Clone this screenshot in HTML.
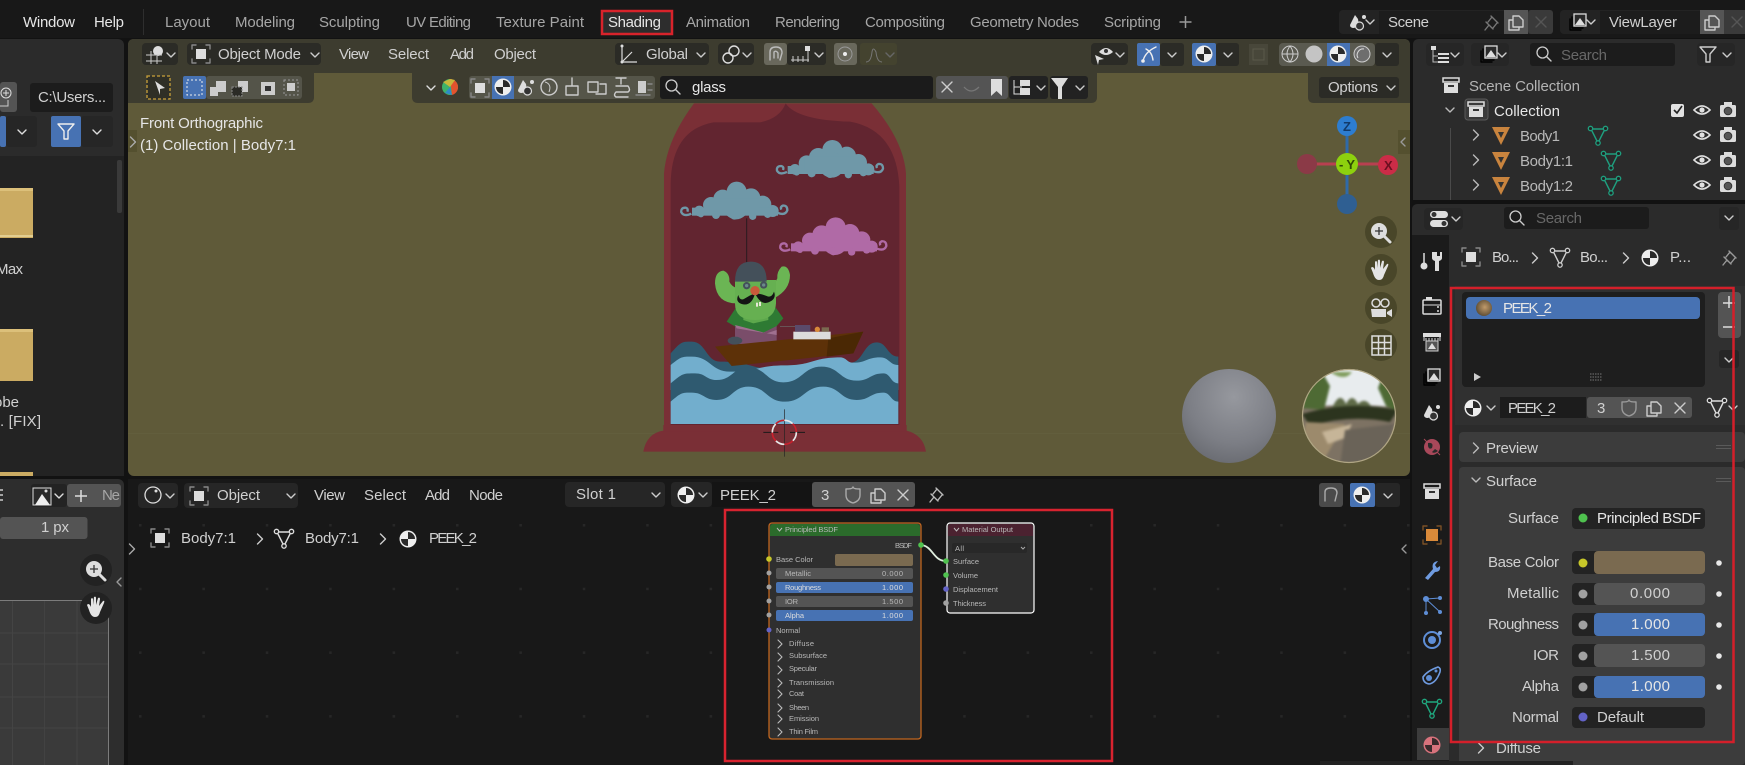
<!DOCTYPE html>
<html><head><meta charset="utf-8"><title>Blender Shading</title>
<style>
html,body{margin:0;padding:0;background:#121212;width:1745px;height:765px;overflow:hidden}
svg{display:block;filter:blur(.35px)}
text{font-family:"Liberation Sans",sans-serif;font-size:15px;fill:#d0d0d0}
.d{fill:#a6a6a6}.w{fill:#e6e6e6}.g{fill:#686868}
.n text,text.n{font-size:7.5px;fill:#b8b8b8}
.s{fill:none;stroke:currentColor;stroke-width:1.4;stroke-linecap:round;stroke-linejoin:round}
</style></head><body>
<svg width="1745" height="765" viewBox="0 0 1745 765" xmlns="http://www.w3.org/2000/svg">
<defs>
<g id="cd"><path class="s" d="M-4-2L0 2L4-2"/></g>
<g id="cr"><path class="s" d="M-2.5-5L2.5 0L-2.5 5"/></g>
<g id="cl"><path class="s" d="M2-4L-2 0L2 4"/></g>
<g id="obj"><rect x="-5" y="-5" width="10" height="10" fill="#ddd"/><path class="s" style="color:#888" stroke-width="1" d="M-9-5V-9H-5M5-9H9V-5M9 5V9H5M-5 9H-9V5"/></g>
<g id="mesh"><path class="s" d="M-7-6L7-6L0 8Z"/><circle cx="-7.500" cy="-6.500" r="2.200" fill="#222" stroke="currentColor" stroke-width="1.300"/><circle cx="7.500" cy="-6.500" r="2.200" fill="#222" stroke="currentColor" stroke-width="1.300"/><circle cx="0" cy="8" r="2.200" fill="#222" stroke="currentColor" stroke-width="1.300"/></g>
<g id="mat"><circle r="8.500" fill="#eee"/><path d="M0-7A7 7 0 0 1 7 0H0ZM0 0V7A7 7 0 0 1-7 0Z" fill="#2a2a2a"/></g>
<g id="box"><rect x="-8" y="-8" width="16" height="4" fill="none" stroke="#ddd" stroke-width="1.500"/><rect x="-7" y="-3" width="14" height="10" fill="#ddd"/><rect x="-3" y="-1" width="6" height="2" fill="#333"/></g>
<g id="eye"><path d="M-8 0Q0-8 8 0Q0 8-8 0Z" fill="none" stroke="#e0e0e0" stroke-width="1.600"/><circle r="2.600" fill="#e0e0e0"/></g>
<g id="cam"><rect x="-8" y="-5" width="16" height="12" rx="1.500" fill="#dcdcdc"/><rect x="-4" y="-8" width="8" height="3" fill="#dcdcdc"/><circle cy="1" r="3.800" fill="#555" stroke="#333"/></g>
<g id="tri"><path d="M-9-8H9L0 10Z" fill="#c9843e"/><path d="M-3-3H3L0 3Z" fill="#333"/></g>
<g id="pin"><path class="s" d="M-5 7L-1 2M-4-1L3 6M-2-1L2-6M3 5L7 0M1-7L8 0"/></g>
<g id="cpy"><path class="s" d="M-3-6H3L7-2V5H-3ZM-3-2H-7V8H3V5"/></g>
<g id="x"><path class="s" d="M-5-5L5 5M5-5L-5 5"/></g>
<g id="shd"><path class="s" d="M-7-6Q0-6 0-8Q0-6 7-6V0Q7 6 0 8Q-7 6-7 0Z"/></g>
<g id="srch"><circle cx="-1.500" cy="-1.500" r="5.500" fill="none" stroke="currentColor" stroke-width="1.300"/><path class="s" d="M2.500 2.500L7 7"/></g>
<g id="fun"><path class="s" d="M-8-7H8L2 0V8L-2 8V0Z"/></g>
<g id="scn"><path d="M-3-7L-8 3Q-8 6-4 6L1 4L0-3Z" fill="#ddd"/><circle cx="1.500" cy="4" r="4" fill="#333" stroke="#ddd" stroke-width="1.200"/><circle cx="6" cy="-5" r="2" fill="#ddd"/></g>
<g id="vl"><path class="s" d="M-8-3V8H3M-6-5V6H5"/><rect x="-4" y="-8" width="12" height="12" fill="#2a2a2a" stroke="#ddd" stroke-width="1.300"/><path d="M-3 3L2-4L7 3Z" fill="#ddd"/></g>
<g id="lens"><circle cx="-1" cy="-1" r="8" fill="#ddd"/><path d="M-5-1H3M-1-5V3" stroke="#333" stroke-width="1.300"/><path d="M5 5L10 10" stroke="#ddd" stroke-width="3" stroke-linecap="round"/></g>
<g id="hand"><path d="M-8 2L-10-3Q-9-5-7-3L-6-1V-9Q-5-11-4-9V-3L-3-11Q-1-12-1-10V-3L1-10Q3-11 3-9L2-2L6-7Q8-8 7-5L3 4Q2 9-2 9Q-6 9-8 2Z" fill="#e4e4e4"/></g>
<g id="cld">
<circle cx="172" cy="30" r="30"/><circle cx="130" cy="52" r="28"/><circle cx="215" cy="48" r="28"/><circle cx="95" cy="70" r="24"/><circle cx="250" cy="68" r="26"/><circle cx="60" cy="88" r="16"/><circle cx="280" cy="88" r="18"/><circle cx="170" cy="75" r="38"/>
<rect x="38" y="78" width="258" height="24"/><rect x="90" y="50" width="150" height="40"/><circle cx="110" cy="100" r="12"/><circle cx="165" cy="102" r="12"/><circle cx="220" cy="104" r="11"/><circle cx="265" cy="98" r="11"/><circle cx="65" cy="98" r="9"/>
<path d="M36 96Q14 106 6 92Q4 78 18 78Q28 80 24 90M296 94Q318 102 324 86Q324 70 310 72Q302 76 306 84" fill="none" stroke="currentColor" stroke-width="7"/>
</g>
<radialGradient id="sg" cx=".55" cy=".3" r=".75"><stop offset="0" stop-color="#96989e"/><stop offset=".65" stop-color="#7c7e85"/><stop offset="1" stop-color="#686a70"/></radialGradient>
<radialGradient id="pm" cx=".55" cy=".45" r=".6"><stop offset="0" stop-color="#c09a6a"/><stop offset="1" stop-color="#5a4a32"/></radialGradient>
<clipPath id="hc"><circle cx="1349" cy="416" r="47"/></clipPath>
<pattern id="dots" x="139" y="524" width="63.400" height="63.700" patternUnits="userSpaceOnUse"><rect width="2.500" height="2.500" fill="#272727"/></pattern>
</defs>

<rect width="1745" height="765" fill="#121212"/>
<rect width="1745" height="38" fill="#181818"/>

<!-- top bar -->
<text class="w" x="23" y="27" textLength="52">Window</text>
<text class="w" x="94" y="27" textLength="30">Help</text>
<rect x="143" y="9" width="1" height="26" fill="#2e2e2e"/>
<text class="d" x="165" y="27" textLength="45">Layout</text>
<text class="d" x="235" y="27" textLength="60">Modeling</text>
<text class="d" x="319" y="27" textLength="61">Sculpting</text>
<text class="d" x="406" y="27" textLength="65">UV Editing</text>
<text class="d" x="496" y="27" textLength="88">Texture Paint</text>
<rect x="602" y="11" width="70" height="23" fill="#2d2d2d" stroke="#d8232b" stroke-width="2.500"/>
<text class="w" x="608" y="27" textLength="53">Shading</text>
<text class="d" x="686" y="27" textLength="64">Animation</text>
<text class="d" x="775" y="27" textLength="65">Rendering</text>
<text class="d" x="865" y="27" textLength="80">Compositing</text>
<text class="d" x="970" y="27" textLength="109">Geometry Nodes</text>
<text class="d" x="1104" y="27" textLength="57">Scripting</text>
<path d="M1185.500 16V28M1179.500 22H1191.500" stroke="#999" stroke-width="1.500"/>

<rect x="1339" y="10" width="214" height="24" rx="4" fill="#232323"/>
<use href="#scn" x="1358" y="22"/><use href="#cd" x="1370" y="22" style="color:#ccc"/>
<rect x="1379" y="11" width="125" height="23" fill="#1c1c1c"/>
<text x="1388" y="27" textLength="41">Scene</text>
<use href="#pin" x="1490" y="23" style="color:#777"/>
<rect x="1504" y="10" width="24" height="24" fill="#555"/><use href="#cpy" x="1516" y="22" style="color:#ccc"/>
<rect x="1528" y="10" width="25" height="24" rx="3" fill="#3a3a3a"/><use href="#x" x="1541" y="22" style="color:#555"/>
<rect x="1560" y="10" width="185" height="24" rx="4" fill="#232323"/>
<use href="#vl" x="1578" y="22"/><use href="#cd" x="1591" y="22" style="color:#ccc"/>
<rect x="1600" y="11" width="100" height="23" fill="#1c1c1c"/>
<text x="1609" y="27" textLength="68">ViewLayer</text>
<rect x="1700" y="10" width="24" height="24" fill="#555"/><use href="#cpy" x="1712" y="22" style="color:#ccc"/>
<rect x="1724" y="10" width="21" height="24" fill="#3a3a3a"/><use href="#x" x="1737" y="22" style="color:#555"/>

<!-- left top panel -->
<rect x="-6" y="39" width="130" height="437" rx="6" fill="#2b2b2b"/>
<rect x="0" y="156" width="124" height="320" fill="#232323"/>
<rect x="0" y="82" width="17" height="30" rx="3" fill="#545454"/>
<circle cx="6" cy="93" r="5" fill="none" stroke="#ddd"/><path d="M3 93H9M6 90V96" stroke="#ddd"/>
<path d="M0 106H8V100" fill="none" stroke="#ccc"/>
<rect x="30" y="83" width="83" height="29" rx="3" fill="#1c1c1c"/>
<text x="38" y="102" textLength="68">C:\Users...</text>
<rect x="0" y="116" width="6" height="31" rx="2" fill="#4772b3"/>
<rect x="6" y="116" width="31" height="31" rx="3" fill="#262626"/><use href="#cd" x="22" y="132" style="color:#ddd"/>
<rect x="51" y="116" width="30" height="31" rx="2" fill="#4772b3"/><use href="#fun" x="66" y="131" style="color:#eee"/>
<rect x="81" y="116" width="32" height="31" rx="3" fill="#262626"/><use href="#cd" x="97" y="132" style="color:#ddd"/>
<rect x="117" y="160" width="5" height="53" rx="2" fill="#3a3a3a"/>
<rect x="0" y="188" width="33" height="50" fill="#cbab62"/><rect x="0" y="188" width="33" height="3" fill="#dcc07a"/><rect x="0" y="235" width="33" height="2" fill="#e2cd90"/>
<rect x="0" y="329" width="33" height="52" fill="#cbab62"/><rect x="0" y="329" width="33" height="3" fill="#dcc07a"/>
<rect x="0" y="472" width="33" height="4" fill="#cbab62"/>
<text x="-4" y="274" textLength="27">Max</text>
<text x="-6" y="407" textLength="25">obe</text>
<text x="0" y="426" textLength="41">. [FIX]</text>

<!-- left bottom panel -->
<rect x="-6" y="479" width="130" height="290" rx="6" fill="#2d2d2d"/>
<path d="M0 490H3M0 495H3M0 500H3" stroke="#ccc" stroke-width="1.500"/>
<rect x="31" y="484" width="36" height="23" rx="3" fill="#232323"/>
<rect x="33" y="488" width="18" height="17" fill="#2a2a2a" stroke="#ddd"/><path d="M35 505L42 494L50 505Z" fill="#eee"/><circle cx="46" cy="491" r="1.500" fill="#ddd"/>
<use href="#cd" x="59" y="496" style="color:#ddd"/>
<rect x="67" y="484" width="54" height="23" rx="3" fill="#545454"/>
<path d="M81 490V502M75 496H87" stroke="#ddd" stroke-width="1.500"/>
<text x="102" y="500" textLength="18" class="d">Ne</text>
<rect x="0" y="517" width="87.500" height="22" rx="3" fill="#545454"/>
<text x="41" y="532" textLength="28">1 px</text>
<rect x="0" y="600" width="108" height="165" fill="#3a3a3a"/>
<path d="M0 633H108M0 664H108M0 697H108M0 728H108M12.500 600V765M44.600 600V765M77 600V765" stroke="#444"/>
<path d="M0 600.500H108.500V765" fill="none" stroke="#7c7c7c"/>
<circle cx="96" cy="570" r="16" fill="#222"/><circle cx="96" cy="608" r="16" fill="#222"/>
<use href="#lens" x="95" y="570"/><use href="#hand" x="97" y="608"/>
<use href="#cl" x="119" y="582" style="color:#999"/>

<!-- viewport -->
<rect x="128" y="39" width="1282" height="437" rx="6" fill="#5f5a39"/>
<path d="M128 433.500H1410" stroke="#625e3d"/>
<g transform="translate(620 90) scale(.33333)">
<path d="M132 1025V250Q140 150 222 40H755Q850 150 858 250V1025Z" fill="#7a2f36"/>
<path d="M152 1005V280Q155 120 280 97H420Q480 85 497 40Q530 90 690 95Q830 120 838 290V1005Z" fill="#622530"/>
<path d="M70 1085Q80 1030 130 1022H860Q910 1035 918 1085Z" fill="#7a2f36"/>
<path d="M130 1005H860V1025H130Z" fill="#7a2f36"/>
<g fill="#6f98a8" style="color:#6f98a8"><use href="#cld" x="465" y="150"/><use href="#cld" x="178" y="275"/></g>
<g fill="#b06aa6" style="color:#b06aa6"><use href="#cld" x="475" y="382"/></g>
<path d="M380 385V760" stroke="#2a1a20" stroke-width="3"/>
<!-- waves -->
<path d="M152 790C184 755 184 755 215 755C258 755 258 815 300 815C395 815 395 840 490 840C590 840 590 818 690 818C730 818 730 757 770 757C802 757 802 800 835 800V880H152Z" fill="#2f5a70"/>
<path d="M152 825C184 800 184 800 215 800C272 800 272 845 330 845C412 845 412 826 495 826C578 826 578 802 660 802C680 802 680 818 700 818C740 818 740 802 780 802C808 802 808 825 835 825V900H152Z" fill="#72aecd"/>
<path d="M152 880C188 850 188 850 225 850C258 850 258 870 290 870C338 870 338 832 385 832C438 832 438 877 490 877C548 877 548 830 605 830C658 830 658 872 710 872C750 872 750 850 790 850C812 850 812 880 835 880V945H152Z" fill="#2f5a70"/>
<path d="M152 935C184 908 184 908 215 908C252 908 252 930 290 930C338 930 338 890 385 890C440 890 440 935 495 935C552 935 552 890 610 890C660 890 660 930 710 930C750 930 750 908 790 908C812 908 812 935 835 935V1002H152Z" fill="#72aecd"/>
<!-- character -->
<path d="M345 762H470V700H345Z" fill="#7a4d6a"/>
<ellipse cx="345" cy="752" rx="22" ry="12" fill="#44505a"/>
<path d="M320 695L350 650H465L490 685L470 708L430 728L350 712Z" fill="#2e7a33"/>
<path d="M370 650H445V690L400 700L370 690Z" fill="#5da84c"/>
<path d="M345 705L440 730L470 720V735L350 715Z" fill="#a07090"/>
<path d="M350 640Q290 640 285 580Q285 545 310 542Q330 550 328 575Q335 590 352 595Z" fill="#6bb554"/>
<path d="M462 625Q510 600 510 555Q505 525 485 530Q470 545 472 565L458 590Z" fill="#6bb554"/>
<path d="M345 570H468V640Q465 690 405 690Q345 690 345 640Z" fill="#66b051"/>
<path d="M345 575Q345 515 392 515Q440 515 440 575Z" fill="#44505a"/>
<circle cx="380" cy="587" r="11" fill="#44505a"/><circle cx="431" cy="585" r="11" fill="#44505a"/>
<circle cx="380" cy="587" r="5" fill="#6a8a8a"/><circle cx="431" cy="585" r="5" fill="#6a8a8a"/>
<path d="M405 610Q395 650 365 642Q345 635 355 615Q360 635 375 625Q390 615 405 610Z" fill="#141414"/>
<path d="M405 610Q425 650 450 635Q470 625 462 605Q455 625 440 618Q420 610 405 610Z" fill="#141414"/>
<circle cx="405" cy="602" r="14" fill="#c85a3a"/>
<rect x="408" y="638" width="6" height="12" fill="#e8e8d8"/><rect x="417" y="636" width="6" height="12" fill="#e8e8d8"/>
<!-- boat -->
<path d="M285 770L730 725L700 790L335 828Z" fill="#5d3108"/>
<path d="M625 745L730 725L700 790L620 800Z" fill="#4a2804"/>
<rect x="520" y="725" width="112" height="23" fill="#dcdcdc"/>
<rect x="525" y="705" width="46" height="20" fill="#5a4a6a"/>
<circle cx="592" cy="718" r="8" fill="#d98a3a"/><rect x="605" y="712" width="22" height="13" fill="#7a6a50"/>
<path d="M480 710H525" stroke="#6a6a6a" stroke-width="2"/>
<path d="M493 958V1100" stroke="#222" stroke-width="2"/>
<path d="M430 1027H475M510 1027H555" stroke="#1a1a1a" stroke-width="3"/>
<circle cx="493" cy="1027" r="36" fill="none" stroke="#e8e8e8" stroke-width="5" stroke-dasharray="28 28"/>
<circle cx="493" cy="1027" r="36" fill="none" stroke="#c8202c" stroke-width="5" stroke-dasharray="28 28" stroke-dashoffset="28"/>
</g>

<!-- viewport overlays -->
<path d="M128 73V45Q128 39 134 39H1404Q1410 39 1410 45V73Z" fill="#3d3c2f"/>
<path d="M128 73H314V97Q314 103 308 103H128Z" fill="#3d3c2f"/>
<path d="M412 73H1097V97Q1097 103 1091 103H418Q412 103 412 97Z" fill="#3d3c2f"/>
<path d="M1308 73H1410V103H1314Q1308 103 1308 97Z" fill="#3d3c2f"/>

<text class="w" x="140" y="128" textLength="123">Front Orthographic</text>
<text class="w" x="140" y="150" textLength="156">(1) Collection | Body7:1</text>
<rect x="128" y="130" width="9" height="22" fill="#54502f"/><use href="#cr" x="133" y="142" style="color:#aaa"/>
<rect x="1398" y="130" width="12" height="24" fill="#54502f"/><use href="#cl" x="1403" y="142" style="color:#999"/>

<!-- header row 1 -->
<rect x="142" y="43" width="36" height="22" rx="4" fill="#2b2b26"/>
<circle cx="158" cy="51" r="5" fill="#ddd"/><path d="M146 55H162M146 61H162M151 51V64M157 56V64" stroke="#ccc"/><use href="#cd" x="171" y="55" style="color:#ccc"/>
<rect x="187" y="43" width="134" height="22" rx="4" fill="#2b2b26"/>
<use href="#obj" x="201" y="54"/>
<text x="218" y="59" textLength="83">Object Mode</text><use href="#cd" x="315" y="55" style="color:#ccc"/>
<text x="339" y="59" textLength="30">View</text>
<text x="388" y="59" textLength="41">Select</text>
<text x="450" y="59" textLength="24">Add</text>
<text x="494" y="59" textLength="42">Object</text>
<rect x="615" y="43" width="94" height="22" rx="4" fill="#2b2b26"/>
<path d="M622 46V62H637M622 62L632 52" fill="none" stroke="#ddd" stroke-width="1.200"/><circle cx="622" cy="46" r="1.500" fill="#ddd"/><circle cx="622" cy="62" r="1.500" fill="#ddd"/>
<text x="646" y="59" textLength="42">Global</text><use href="#cd" x="701" y="55" style="color:#ccc"/>
<rect x="718" y="43" width="36" height="22" rx="4" fill="#2b2b26"/>
<circle cx="734" cy="51" r="5" fill="none" stroke="#ddd" stroke-width="1.400"/><circle cx="728" cy="58" r="5" fill="none" stroke="#ddd" stroke-width="1.400"/><use href="#cd" x="747" y="55" style="color:#ccc"/>
<rect x="764" y="43" width="23" height="22" rx="3" fill="#69685c"/>
<path class="s" style="color:#bbb" d="M770 60V52Q770 47 776 47Q782 47 782 53L780 60M774 58V52Q776 50 778 53V58"/>
<rect x="787" y="43" width="39" height="22" rx="3" fill="#2b2b26"/>
<path d="M791 60H809M793 56V62M798 56V62M803 56V62M808 50V62" stroke="#ccc"/><rect x="805" y="46" width="5" height="5" fill="#ddd"/><use href="#cd" x="819" y="55" style="color:#ccc"/>
<rect x="834" y="43" width="23" height="22" rx="3" fill="#69685c"/>
<circle cx="845" cy="54" r="7" fill="none" stroke="#999"/><circle cx="845" cy="54" r="2" fill="#eee"/>
<rect x="860" y="43" width="37" height="22" rx="3" fill="#44432f"/>
<path d="M866 62Q871 62 872 52Q873 46 876 52Q877 62 882 62" fill="none" stroke="#777"/><use href="#cd" x="890" y="55" style="color:#666"/>

<rect x="1091" y="43" width="37" height="22" rx="4" fill="#2b2b26"/>
<path d="M1099 52Q1106 44 1113 52Q1106 58 1099 52Z" fill="#ddd"/><circle cx="1106" cy="51" r="2" fill="#333"/><path d="M1095 55L1104 59L1099 60L1098 65Z" fill="#ddd"/><use href="#cd" x="1120" y="55" style="color:#ccc"/>
<rect x="1137" y="43" width="23" height="23" rx="2" fill="#4772b3"/>
<path class="s" style="color:#eee" d="M1143 61Q1145 52 1156 47M1146 49Q1152 52 1153 60"/><circle cx="1143" cy="61" r="1.800" fill="#eee"/>
<rect x="1160" y="43" width="24" height="23" rx="3" fill="#2b2b26"/><use href="#cd" x="1172" y="55" style="color:#ccc"/>
<rect x="1192" y="43" width="24" height="23" rx="2" fill="#4772b3"/><use href="#mat" x="1204" y="54"/>
<rect x="1216" y="43" width="23" height="23" rx="3" fill="#2b2b26"/><use href="#cd" x="1228" y="55" style="color:#ccc"/>
<rect x="1249" y="44" width="19" height="21" fill="#48473a"/><rect x="1253" y="49" width="11" height="11" fill="none" stroke="#5a5a4a"/>
<rect x="1279" y="43" width="96" height="23" rx="4" fill="#5a5a50"/>
<circle cx="1290" cy="54" r="8" fill="none" stroke="#ccc"/><path d="M1282 54H1298M1290 46Q1284 54 1290 62Q1296 54 1290 46" fill="none" stroke="#ccc"/>
<circle cx="1314" cy="54" r="8.500" fill="#c4c4c4"/>
<rect x="1327" y="43" width="23" height="23" fill="#4772b3"/><use href="#mat" x="1338" y="54"/>
<circle cx="1362" cy="54" r="8" fill="#6e6e6e" stroke="#ccc"/><path d="M1358 58A6 6 0 0 1 1364 49" fill="none" stroke="#ddd"/>
<rect x="1375" y="43" width="24" height="23" rx="3" fill="#2b2b26"/><use href="#cd" x="1387" y="55" style="color:#ccc"/>

<!-- header row 2 -->
<rect x="147" y="76" width="23" height="23" fill="#2f2f26" stroke="#c9a13b" stroke-width="1.300" stroke-dasharray="3 2"/>
<path d="M155 81L165 88L160 89L160 95Z" fill="#ddd"/>
<rect x="183" y="76" width="23" height="23" rx="2" fill="#4772b3"/><rect x="187" y="80" width="15" height="15" fill="none" stroke="#eee" stroke-dasharray="2 2"/>
<rect x="206" y="76" width="96" height="23" rx="3" fill="#545449"/>
<path d="M210 87H216V81H226V92H218V96H210Z" fill="#ccc"/>
<path d="M238 81H248V92H238Z" fill="#ccc"/><rect x="232" y="87" width="10" height="9" fill="#2b2b26" stroke="#888" stroke-dasharray="2 1"/>
<rect x="261" y="82" width="14" height="13" fill="#ccc"/><rect x="265" y="86" width="6" height="5" fill="#333"/>
<rect x="284" y="80" width="14" height="15" fill="none" stroke="#999" stroke-dasharray="2 2"/><rect x="287" y="83" width="8" height="8" fill="#ccc"/>
<use href="#cd" x="431" y="88" style="color:#ddd"/>
<circle cx="450" cy="87" r="8" fill="#3fb26a"/><path d="M450 79A8 8 0 0 1 458 87A8 8 0 0 1 452 95Z" fill="#e2532e"/><path d="M443 82L450 79L455 80L450 87Z" fill="#c7b63a"/><path d="M450 87L452 95L445 93Z" fill="#2f8ac7"/>
<rect x="469" y="76" width="186" height="23" rx="3" fill="#555549"/>
<use href="#obj" x="480" y="88"/>
<rect x="492" y="76" width="22" height="23" fill="#4772b3"/><use href="#mat" x="503" y="87"/>
<use href="#scn" x="526" y="87"/>
<circle cx="549" cy="87" r="8" fill="none" stroke="#ccc" stroke-width="1.400"/><path d="M545 82Q552 84 549 92" fill="none" stroke="#ccc"/>
<path class="s" style="color:#ccc" d="M572 78V86M566 86H578V95H566Z"/>
<path class="s" style="color:#ccc" d="M588 82H598V92H588ZM600 84H606V94H596"/>
<path class="s" style="color:#ccc" d="M616 78H626M621 78V84M616 86H628Q631 90 628 92H616Q613 95 616 97H628"/>
<path d="M638 81H646V93H638Z" fill="#ccc"/><path class="s" style="color:#888" d="M648 84H652M648 90H652M636 95H650"/>
<rect x="660" y="76" width="273" height="23" rx="3" fill="#1b1b1b"/>
<use href="#srch" x="673" y="87" style="color:#ccc"/>
<text class="w" x="692" y="92" textLength="34">glass</text>
<rect x="936" y="76" width="72" height="23" rx="3" fill="#545454"/>
<use href="#x" x="947" y="87" style="color:#ccc"/>
<path d="M964 87Q971 95 979 87" fill="none" stroke="#777" stroke-width="1.300"/>
<path d="M991 79H1002V96L996.500 91L991 96Z" fill="#ddd"/>
<rect x="1009" y="76" width="39" height="23" rx="3" fill="#222"/>
<path d="M1014 80V94H1022M1014 87H1022" stroke="#ddd" fill="none"/><rect x="1020" y="80" width="10" height="6" fill="#ddd"/><rect x="1020" y="88" width="10" height="7" fill="#ddd"/><use href="#cd" x="1041" y="88" style="color:#ccc"/>
<rect x="1050" y="76" width="38" height="23" rx="3" fill="#222"/>
<path d="M1051 78H1068L1062 87V99H1058V87Z" fill="#ddd"/><use href="#cd" x="1080" y="88" style="color:#ccc"/>
<rect x="1319" y="77" width="80" height="21" rx="3" fill="#2b2b26"/>
<text x="1328" y="92" textLength="50">Options</text><use href="#cd" x="1391" y="88" style="color:#ccc"/>

<!-- gizmo -->
<path d="M1347 126V204" stroke="#2f6aa8" stroke-width="3"/>
<path d="M1307 164H1388" stroke="#b84050" stroke-width="3"/>
<circle cx="1347" cy="126" r="10" fill="#2d7dd0"/><text x="1343" y="131" textLength="9" style="font-size:13px;font-weight:bold;fill:#123a6a">Z</text>
<circle cx="1347" cy="204" r="10" fill="#2f5f92"/>
<circle cx="1307" cy="164" r="10" fill="#8b3a47"/>
<circle cx="1388" cy="165" r="10" fill="#cb2c47"/><text x="1384" y="170" textLength="9" style="font-size:13px;font-weight:bold;fill:#6a0f20">X</text>
<circle cx="1347" cy="164" r="11" fill="#8dd10e"/><text x="1339" y="169" textLength="16" style="font-size:13px;font-weight:bold;fill:#2f4a05">- Y</text>

<g fill="#494629"><circle cx="1381" cy="232" r="16"/><circle cx="1381" cy="270" r="16"/><circle cx="1381" cy="308" r="16"/><circle cx="1381" cy="345" r="16"/></g>
<use href="#lens" x="1380" y="232"/><use href="#hand" x="1381" y="271"/>
<g fill="none" stroke="#ddd" stroke-width="1.500"><circle cx="1376" cy="303" r="4"/><circle cx="1385" cy="303" r="4"/></g><path d="M1371 309H1386V317H1372ZM1387 312L1392 309V317L1387 314Z" fill="#ddd"/>
<rect x="1372" y="336" width="19" height="19" fill="none" stroke="#ddd" stroke-width="1.500"/><path d="M1372 342.500H1391M1372 348.500H1391M1378.500 336V355M1384.500 336V355" stroke="#ddd" stroke-width="1.500"/>

<circle cx="1229" cy="416" r="47" fill="url(#sg)"/>
<g clip-path="url(#hc)"><g style="filter:blur(1.4px)">
<rect x="1298" y="366" width="104" height="100" fill="#7d7263"/>
<path d="M1298 366H1402V408Q1350 402 1298 408Z" fill="#e8ecee"/>
<path d="M1302 408Q1306 385 1322 372L1330 386L1324 410ZM1384 372Q1400 388 1400 412L1386 406L1378 388Z" fill="#4e6a34"/>
<path d="M1330 372Q1345 382 1352 372Z" fill="#7f9c5c"/>
<path d="M1332 408Q1340 390 1346 404Q1352 392 1358 404Q1366 396 1372 408Z" fill="#5f6b48"/>
<path d="M1302 414Q1350 400 1398 410L1390 422Q1350 414 1310 426Z" fill="#2c341e"/>
<path d="M1306 422L1345 424L1332 446L1320 466L1302 442Z" fill="#9c8a6c"/>
<path d="M1322 432L1352 424L1345 438L1328 444Z" fill="#c6b598"/>
<path d="M1345 430L1394 424L1384 456L1340 466Z" fill="#6a6358"/>
</g></g>
<circle cx="1349" cy="416" r="46.500" fill="none" stroke="#b0a684" stroke-width="1.200"/>

<!-- node editor -->
<rect x="128" y="479" width="1282" height="286" fill="#181818"/>
<rect x="128" y="520" width="1282" height="245" fill="url(#dots)"/>
<rect x="138" y="483" width="40" height="25" rx="4" fill="#262626"/>
<circle cx="153" cy="495" r="8" fill="none" stroke="#ddd" stroke-width="1.300"/><circle cx="156" cy="491" r="1.500" fill="#ddd"/><use href="#cd" x="170" y="496" style="color:#ccc"/>
<rect x="184" y="483" width="114" height="25" rx="4" fill="#262626"/>
<use href="#obj" x="199" y="496"/>
<text x="217" y="500" textLength="43">Object</text><use href="#cd" x="291" y="496" style="color:#ccc"/>
<text x="314" y="500" textLength="31">View</text>
<text x="364" y="500" textLength="42">Select</text>
<text x="425" y="500" textLength="25">Add</text>
<text x="469" y="500" textLength="34">Node</text>
<rect x="565" y="482" width="100" height="25" rx="4" fill="#262626"/>
<text x="576" y="499" textLength="40">Slot 1</text><use href="#cd" x="656" y="495" style="color:#ccc"/>
<rect x="671" y="482" width="41" height="25" rx="4" fill="#262626"/>
<use href="#mat" x="686" y="495"/><use href="#cd" x="703" y="495" style="color:#ccc"/>
<rect x="712" y="482" width="100" height="25" fill="#141414"/>
<text x="720" y="500" textLength="56">PEEK_2</text>
<rect x="812" y="482" width="103" height="25" rx="3" fill="#545454"/>
<text x="821" y="500" textLength="8">3</text>
<use href="#shd" x="853" y="495" style="color:#aaa"/>
<use href="#cpy" x="878" y="495" style="color:#ccc"/>
<use href="#x" x="903" y="495" style="color:#ccc"/>
<use href="#pin" x="935" y="495" style="color:#bbb"/>
<rect x="1319" y="483" width="24" height="24" rx="3" fill="#4a4a4a"/>
<path class="s" style="color:#aaa" d="M1325 501V492Q1325 488 1331 488Q1337 488 1337 493L1335 501"/>
<rect x="1350" y="483" width="25" height="24" rx="2" fill="#4772b3"/><use href="#mat" x="1362" y="495"/>
<rect x="1375" y="483" width="25" height="24" rx="3" fill="#262626"/><use href="#cd" x="1388" y="496" style="color:#ccc"/>

<use href="#obj" x="160" y="538"/>
<text x="181" y="543" textLength="55">Body7:1</text><use href="#cr" x="260" y="539" style="color:#ccc"/>
<use href="#mesh" x="284" y="538" style="color:#ddd"/>
<text x="305" y="543" textLength="54">Body7:1</text><use href="#cr" x="383" y="539" style="color:#ccc"/>
<use href="#mat" x="408" y="539"/>
<text x="429" y="543" textLength="48">PEEK_2</text>
<use href="#cr" x="132" y="549" style="color:#aaa"/>
<use href="#cl" x="1404" y="549" style="color:#999"/>

<!-- nodes -->
<rect x="769" y="523" width="152" height="216" rx="3" fill="#2f2f2f" stroke="#c0661f" stroke-width="1.300"/>
<path d="M770 536V527Q770 524 773 524H917Q920 524 920 527V536Z" fill="#2b6b2b"/>
<g class="n">
<path d="M777 528L779.500 531L782 528" fill="none" stroke="#bbb"/>
<text x="785" y="532" textLength="53">Principled BSDF</text>
<text x="895" y="548" textLength="17">BSDF</text>
<text x="776" y="562" textLength="37">Base Color</text>
<rect x="835" y="554" width="78" height="12" rx="2" fill="#7a6a50"/>
<rect x="776" y="568" width="137" height="11" rx="2" fill="#545454"/><text x="785" y="576" textLength="26">Metallic</text><text x="882" y="576" textLength="21">0.000</text>
<rect x="776" y="582" width="137" height="11" rx="2" fill="#4772b3"/><text x="785" y="590" textLength="36" style="fill:#ddd">Roughness</text><text x="882" y="590" textLength="21" style="fill:#ddd">1.000</text>
<rect x="776" y="596" width="137" height="11" rx="2" fill="#545454"/><text x="785" y="604" textLength="13">IOR</text><text x="882" y="604" textLength="21">1.500</text>
<rect x="776" y="610" width="137" height="11" rx="2" fill="#4772b3"/><text x="785" y="618" textLength="19" style="fill:#ddd">Alpha</text><text x="882" y="618" textLength="21" style="fill:#ddd">1.000</text>
<text x="776" y="633" textLength="24">Normal</text>
<text x="789" y="646" textLength="25">Diffuse</text>
<text x="789" y="658" textLength="38">Subsurface</text>
<text x="789" y="671" textLength="28">Specular</text>
<text x="789" y="685" textLength="45">Transmission</text>
<text x="789" y="696" textLength="15">Coat</text>
<text x="789" y="710" textLength="20">Sheen</text>
<text x="789" y="721" textLength="30">Emission</text>
<text x="789" y="734" textLength="29">Thin Film</text>
</g>
<g style="color:#bbb"><use href="#cr" x="780" y="644" transform="translate(156 128.800) scale(.8)"/><use href="#cr" x="780" y="657" transform="translate(156 131.400) scale(.8)"/><use href="#cr" x="780" y="670" transform="translate(156 134) scale(.8)"/><use href="#cr" x="780" y="683" transform="translate(156 136.600) scale(.8)"/><use href="#cr" x="780" y="694" transform="translate(156 138.800) scale(.8)"/><use href="#cr" x="780" y="708" transform="translate(156 141.600) scale(.8)"/><use href="#cr" x="780" y="719" transform="translate(156 143.800) scale(.8)"/><use href="#cr" x="780" y="732" transform="translate(156 146.400) scale(.8)"/></g>
<circle cx="769" cy="559" r="2.800" fill="#c7c729"/>
<circle cx="769" cy="573" r="2.500" fill="#a1a1a1"/><circle cx="769" cy="587" r="2.500" fill="#a1a1a1"/><circle cx="769" cy="601" r="2.500" fill="#a1a1a1"/><circle cx="769" cy="615" r="2.500" fill="#a1a1a1"/>
<circle cx="769" cy="630" r="2.500" fill="#6363c7"/>
<path d="M921 545C933 546 933 561 946 561" fill="none" stroke="#dfeede" stroke-width="1.800"/>
<circle cx="921" cy="545" r="2.800" fill="#4fc24f"/>
<rect x="947" y="523" width="87" height="90" rx="3" fill="#2f2f2f" stroke="#fff" stroke-width="1.200"/>
<path d="M948 536V527Q948 524 951 524H1030Q1033 524 1033 527V536Z" fill="#4b2230"/>
<g class="n">
<path d="M954 528L956.500 531L959 528" fill="none" stroke="#bbb"/>
<text x="962" y="532" textLength="51">Material Output</text>
<rect x="952" y="543" width="75" height="10" rx="2" fill="#282828"/><text x="955" y="551" textLength="9">All</text><path d="M1021 547L1023 549L1025 547" fill="none" stroke="#aaa"/>
<text x="953" y="564" textLength="26">Surface</text>
<text x="953" y="578" textLength="25">Volume</text>
<text x="953" y="592" textLength="45">Displacement</text>
<text x="953" y="606" textLength="33">Thickness</text>
</g>
<circle cx="946" cy="561" r="2.800" fill="#4fc24f"/><circle cx="946" cy="575" r="2.800" fill="#4fc24f"/><circle cx="946" cy="589" r="2.800" fill="#6363c7"/><circle cx="946" cy="603" r="2.800" fill="#a1a1a1"/>
<rect x="725" y="510" width="387" height="251" fill="none" stroke="#d8232f" stroke-width="2.500"/>

<!-- outliner -->
<path d="M1413 200V45Q1413 39 1419 39H1745V200Z" fill="#2b2b2b"/>
<rect x="1426" y="43" width="38" height="23" rx="4" fill="#262626"/>
<rect x="1431" y="46" width="5" height="4" fill="#ddd"/><path d="M1433 50V62H1438M1433 56H1438" stroke="#bbb" fill="none"/><path d="M1438 54H1449M1438 58H1449M1438 62H1449" stroke="#ddd" stroke-width="2"/>
<use href="#cd" x="1455" y="55" style="color:#ccc"/>
<rect x="1471" y="43" width="38" height="23" rx="4" fill="#262626"/><use href="#vl" x="1489" y="54"/><use href="#cd" x="1502" y="55" style="color:#ccc"/>
<rect x="1530" y="43" width="145" height="23" rx="3" fill="#1c1c1c"/>
<use href="#srch" x="1544" y="54" style="color:#ccc"/>
<text class="g" x="1561" y="60" textLength="46">Search</text>
<rect x="1697" y="43" width="38" height="23" rx="4" fill="#262626"/><use href="#fun" x="1708" y="54" style="color:#ccc"/><use href="#cd" x="1727" y="55" style="color:#ccc"/>
<use href="#box" x="1451" y="86"/>
<text class="d" x="1469" y="91" textLength="111" style="fill:#b4b4b4">Scene Collection</text>
<use href="#cd" x="1450" y="110" style="color:#bbb"/>
<rect x="1465" y="99" width="23" height="21" rx="3" fill="#3a3a3a" stroke="#5a5a5a"/>
<use href="#box" x="1476" y="110"/>
<text class="w" x="1494" y="116" textLength="66">Collection</text>
<rect x="1671" y="104" width="13" height="13" rx="2" fill="#e2e2e2"/><path d="M1674 110L1677 113L1682 106" fill="none" stroke="#222" stroke-width="1.600"/>
<use href="#eye" x="1702" y="110"/><use href="#cam" x="1728" y="110"/>
<path d="M1450.500 128V200" stroke="#4a4a4a"/>
<use href="#cr" x="1476" y="135" style="color:#bbb"/><use href="#tri" x="1501" y="135"/>
<text class="d" x="1520" y="141" textLength="40" style="fill:#b8b8b8">Body1</text>
<use href="#mesh" x="1598" y="135" style="color:#1f9e7e"/>
<use href="#eye" x="1702" y="135"/><use href="#cam" x="1728" y="135"/>
<use href="#cr" x="1476" y="160" style="color:#bbb"/><use href="#tri" x="1501" y="160"/>
<text class="d" x="1520" y="166" textLength="53" style="fill:#b8b8b8">Body1:1</text>
<use href="#mesh" x="1611" y="160" style="color:#1f9e7e"/>
<use href="#eye" x="1702" y="160"/><use href="#cam" x="1728" y="160"/>
<use href="#cr" x="1476" y="185" style="color:#bbb"/><use href="#tri" x="1501" y="185"/>
<text class="d" x="1520" y="191" textLength="53" style="fill:#b8b8b8">Body1:2</text>
<use href="#mesh" x="1611" y="185" style="color:#1f9e7e"/>
<use href="#eye" x="1702" y="185"/><use href="#cam" x="1728" y="185"/>

<!-- properties -->
<path d="M1412 765V210Q1412 204 1418 204H1745V765Z" fill="#2b2b2b"/>
<rect x="1424" y="208" width="39" height="22" rx="4" fill="#262626"/>
<rect x="1430" y="211" width="18" height="7" rx="3.500" fill="#ddd"/><rect x="1430" y="220" width="18" height="7" rx="3.500" fill="#ddd"/><circle cx="1434" cy="214.500" r="2.500" fill="#333"/><circle cx="1444" cy="223.500" r="2.500" fill="#333"/>
<use href="#cd" x="1456" y="219" style="color:#ccc"/>
<rect x="1504" y="207" width="145" height="22" rx="3" fill="#1c1c1c"/>
<use href="#srch" x="1517" y="218" style="color:#ccc"/>
<text class="g" x="1536" y="223" textLength="46">Search</text>
<rect x="1719" y="207" width="20" height="23" rx="3" fill="#262626"/><use href="#cd" x="1729" y="218" style="color:#ccc"/>

<rect x="1412" y="235" width="37" height="530" fill="#1b1b1b"/>
<rect x="1417" y="728" width="32" height="32" fill="#3c3c3c"/>

<!-- tabs -->
<g transform="translate(1432 262)"><path d="M-8-9V1" stroke="#ddd" stroke-width="1.500"/><circle cx="-8" cy="4" r="3.500" fill="#ddd"/><path d="M0-10V-4Q0-2 3-1V9H7V-1Q10-2 10-4V-10L8-10V-6H5V-10Z" fill="#ddd"/></g>
<g transform="translate(1432 306)"><rect x="-9" y="-6" width="18" height="14" rx="1" fill="none" stroke="#ddd" stroke-width="1.500"/><rect x="-6" y="-9" width="6" height="3" fill="#ddd"/><path d="M-9-1H9" stroke="#ddd"/><circle cx="6" cy="1" r="1" fill="#ddd"/><circle cx="6" cy="5" r="1" fill="#ddd"/></g>
<g transform="translate(1432 342)"><rect x="-9" y="-9" width="18" height="4" fill="#ddd"/><path d="M-8-5V-1M8-5V-1M-6-4V-1M-3-4V-1M0-4V-1M3-4V-1M6-4V-1" stroke="#ddd"/><rect x="-6" y="-1" width="12" height="10" fill="#555" stroke="#ccc"/><path d="M-4 7L0 1L4 7Z" fill="#ddd"/></g>
<use href="#vl" x="1432" y="377"/>
<use href="#scn" x="1432" y="412"/>
<g transform="translate(1432 447)"><circle r="8" fill="#a8485a"/><path d="M-4-4Q2-5 0 1Q-3 3-4-1ZM3 2L6 4Q2 7 0 5Z" fill="#2b2b2b"/><path d="M-8-8L-5-5M8 8L5 5" stroke="#a8485a"/></g>
<use href="#box" x="1432" y="492"/>
<g transform="translate(1432 535)"><rect x="-6" y="-6" width="12" height="12" fill="#d98a3a"/><path class="s" style="color:#7a5026" d="M-9-5V-9H-5M5-9H9V-5M9 5V9H5M-5 9H-9V5"/></g>
<path d="M1425 578L1433 569Q1431 562 1438 561L1435 565L1437 568L1440 566Q1441 572 1435 572L1428 580Z" fill="#6f9be0"/>
<g transform="translate(1432 605)"><circle cx="-6" cy="-6" r="3" fill="#5e8ed6"/><circle cx="8" cy="-7" r="2" fill="#5e8ed6"/><circle cx="8" cy="7" r="2" fill="#5e8ed6"/><circle cx="-6" cy="8" r="2" fill="#5e8ed6"/><path d="M-6-6L8-7M-6-6L8 7M-6-6V8" stroke="#5e8ed6"/></g>
<g transform="translate(1432 640)"><circle r="8" fill="none" stroke="#5e8ed6" stroke-width="2"/><circle r="4" fill="#5e8ed6"/><circle cx="8" cy="-7" r="2" fill="#7ca5e0"/></g>
<g transform="translate(1432 675)"><path d="M-9 2Q-5-4 6-8Q9-7 8-3Q4 8-3 9Q-9 8-9 2Z" fill="none" stroke="#6f9be0" stroke-width="1.600"/><circle cx="-3" cy="3" r="3" fill="#5e8ed6"/><circle cx="4" cy="-4" r="1.500" fill="#5e8ed6"/></g>
<use href="#mesh" x="1432" y="708" style="color:#1fa77e"/>
<g transform="translate(1432 745)"><circle r="8.500" fill="#d8727c"/><path d="M0-7A7 7 0 0 1 7 0H0ZM0 0V7A7 7 0 0 1-7 0Z" fill="#3a2a2c"/></g>

<!-- breadcrumb -->
<use href="#obj" x="1471" y="257"/>
<text x="1492" y="262" textLength="27">Bo...</text><use href="#cr" x="1535" y="258" style="color:#ccc"/>
<use href="#mesh" x="1560" y="257" style="color:#ccc"/>
<text x="1580" y="262" textLength="28">Bo...</text><use href="#cr" x="1626" y="258" style="color:#ccc"/>
<use href="#mat" x="1650" y="258"/>
<text x="1670" y="262" textLength="21">P...</text>
<use href="#pin" x="1728" y="258" style="color:#999"/>

<!-- material list -->
<rect x="1455" y="286" width="290" height="139" fill="#303030"/>
<rect x="1462" y="292" width="243" height="95" rx="4" fill="#1e1e1e"/>
<rect x="1466" y="297" width="234" height="22" rx="4" fill="#4772b3"/>
<circle cx="1484" cy="308" r="8" fill="url(#pm)"/>
<text class="w" x="1503" y="313" textLength="49">PEEK_2</text>
<path d="M1474 373L1481 377L1474 381Z" fill="#ccc"/>
<path d="M1590 374H1602M1590 377H1602M1590 380H1602" stroke="#777" stroke-dasharray="1.500 1"/>
<rect x="1718" y="292" width="23" height="46" rx="4" fill="#545454"/><path d="M1729 296V308M1723 303H1735M1723 327H1735" stroke="#ddd" stroke-width="1.500"/>
<rect x="1719" y="350" width="20" height="18" rx="3" fill="#262626"/><use href="#cd" x="1729" y="360" style="color:#ccc"/>
<use href="#mat" x="1473" y="408"/><use href="#cd" x="1491" y="408" style="color:#ccc"/>
<rect x="1500" y="397" width="86" height="21" fill="#1c1c1c"/>
<text x="1508" y="413" textLength="48">PEEK_2</text>
<rect x="1587" y="397" width="105" height="21" rx="3" fill="#545454"/>
<text x="1597" y="413" textLength="8">3</text>
<use href="#shd" x="1629" y="408" style="color:#999"/><use href="#cpy" x="1654" y="408" style="color:#ccc"/><use href="#x" x="1680" y="408" style="color:#ccc"/>
<use href="#mesh" x="1717" y="407" style="color:#ddd"/><use href="#cd" x="1733" y="408" style="color:#ccc"/>

<!-- panels -->
<rect x="1459" y="432" width="286" height="30" rx="4" fill="#3c3c3c"/>
<use href="#cr" x="1476" y="448" style="color:#bbb"/>
<text x="1486" y="453" textLength="52">Preview</text>
<rect x="1459" y="467" width="286" height="298" rx="4" fill="#3c3c3c"/>
<use href="#cd" x="1476" y="480" style="color:#bbb"/>
<text x="1486" y="486" textLength="51">Surface</text>
<g fill="#5a5a5a"><rect x="1716" y="445" width="15" height="1"/><rect x="1716" y="448" width="15" height="1"/><rect x="1716" y="478" width="15" height="1"/><rect x="1716" y="481" width="15" height="1"/></g>
<text x="1508" y="523" textLength="51">Surface</text>
<text x="1488" y="567" textLength="71">Base Color</text>
<text x="1507" y="598" textLength="52">Metallic</text>
<text x="1488" y="629" textLength="71">Roughness</text>
<text x="1533" y="660" textLength="26">IOR</text>
<text x="1522" y="691" textLength="37">Alpha</text>
<text x="1512" y="722" textLength="47">Normal</text>
<rect x="1572" y="508" width="133" height="21" rx="4" fill="#232323"/>
<circle cx="1583" cy="518" r="4.500" fill="#4fc24f"/>
<text class="w" x="1597" y="523" textLength="104">Principled BSDF</text>
<g fill="#232323">
<rect x="1572" y="551" width="30" height="23" rx="4"/><rect x="1572" y="583" width="30" height="22" rx="4"/><rect x="1572" y="613" width="30" height="23" rx="4"/><rect x="1572" y="644" width="30" height="23" rx="4"/><rect x="1572" y="676" width="30" height="22" rx="4"/><rect x="1572" y="707" width="133" height="21" rx="4"/>
</g>
<rect x="1594" y="551" width="111" height="23" rx="4" fill="#7a6a50"/>
<rect x="1594" y="583" width="111" height="22" rx="4" fill="#545454"/>
<rect x="1594" y="613" width="111" height="23" rx="4" fill="#4772b3"/>
<rect x="1594" y="644" width="111" height="23" rx="4" fill="#545454"/>
<rect x="1594" y="676" width="111" height="22" rx="4" fill="#4772b3"/>
<circle cx="1583" cy="563" r="4.500" fill="#c7c729"/>
<circle cx="1583" cy="594" r="4.500" fill="#a1a1a1"/><circle cx="1583" cy="625" r="4.500" fill="#a1a1a1"/><circle cx="1583" cy="656" r="4.500" fill="#a1a1a1"/><circle cx="1583" cy="687" r="4.500" fill="#a1a1a1"/>
<circle cx="1583" cy="717" r="4.500" fill="#6363c7"/>
<text x="1630" y="598" textLength="40">0.000</text>
<text class="w" x="1631" y="629" textLength="39">1.000</text>
<text x="1631" y="660" textLength="39">1.500</text>
<text class="w" x="1631" y="691" textLength="39">1.000</text>
<text x="1597" y="722" textLength="47">Default</text>
<g fill="#e8e8e8"><circle cx="1719" cy="563" r="2.800"/><circle cx="1719" cy="594" r="2.800"/><circle cx="1719" cy="625" r="2.800"/><circle cx="1719" cy="656" r="2.800"/><circle cx="1719" cy="687" r="2.800"/></g>
<use href="#cr" x="1481" y="748" style="color:#ccc"/>
<text x="1496" y="753" textLength="45">Diffuse</text>
<rect x="1320" y="761" width="253" height="4" fill="#222"/>
<rect x="1451" y="288" width="282.500" height="454" fill="none" stroke="#d41f2a" stroke-width="2.500"/>
</svg>
</body></html>
